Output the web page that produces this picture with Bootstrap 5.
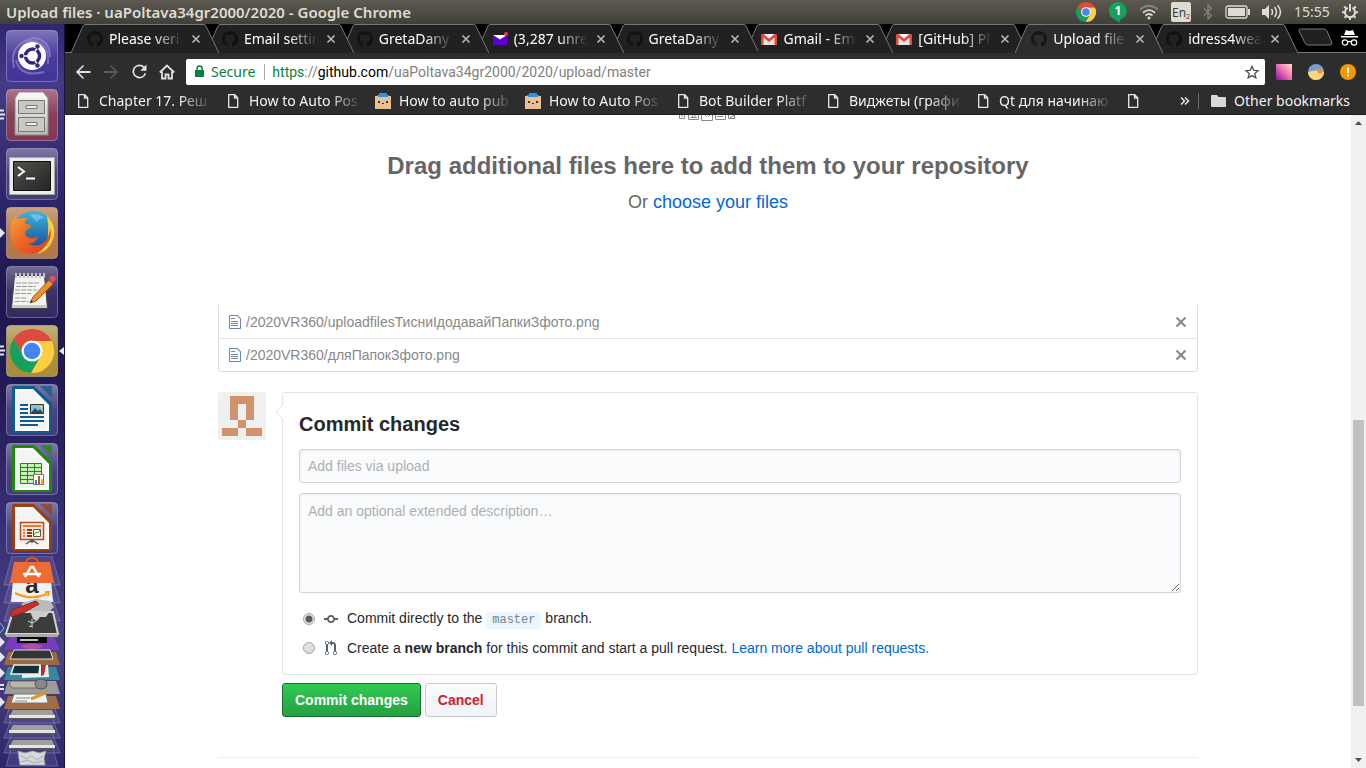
<!DOCTYPE html>
<html lang="en">
<head>
<meta charset="utf-8">
<meta name="viewport" content="width=device-width, initial-scale=1">
<title>Upload files · uaPoltava34gr2000/2020</title>
<link rel="stylesheet" href="https://cdn.jsdelivr.net/npm/bootstrap@5.3.0/dist/css/bootstrap.min.css">
<style>
  body { font-family: "Liberation Sans", Arial, sans-serif; font-size: 14px; line-height: 20px; color: #24292e; background: #fff; }
  svg { display: block; flex: none; }
  .shell-font { font-family: "Noto Sans", sans-serif; line-height: 20px; }
  .plain-btn { border: 0; padding: 0; background: none; color: inherit; }

  /* Desktop panel */
  .panel { height: 24px; padding: 0 8px 0 6px; background: linear-gradient(#5c5950, #403f3a); color: #dfdbd2; }
  .panel-title { font-size: 15px; font-weight: 600; }
  .panel-tray { gap: 12px; font-size: 14px; }
  .panel-clock { width: 36px; }

  /* Launcher */
  .launcher { width: 65px; padding-top: 6px; gap: 7px; border-right: 1px solid #16123c; background: linear-gradient(#2f2673 0, #453a86 8%, #30286f 22%, #1e174f 35%, #221b56 50%, #352d72 65%, #4a4384 85%, #2c2668 100%); }
  .folded { margin-top: -5px; }

  /* Browser frame */
  .tabstrip { height: 28px; padding-left: 6px; background: #000; }
  .tab-row { flex: 1 1 0; min-width: 0; }
  .tab { isolation: isolate; z-index: 1; flex: 1 1 0; min-width: 0; height: 29px; margin-right: -13px; padding: 0 18px 0 16px; color: #fff; font-size: 14px; text-decoration: none; gap: 6px; }
  .tab:nth-child(1) { z-index: 9; }
  .tab:nth-child(2) { z-index: 8; }
  .tab:nth-child(3) { z-index: 7; }
  .tab:nth-child(4) { z-index: 6; }
  .tab:nth-child(5) { z-index: 5; }
  .tab:nth-child(6) { z-index: 4; }
  .tab:nth-child(7) { z-index: 3; }
  .tab.tab-on { z-index: 10; }
  .tab:last-child { margin-right: 0; }
  .tab-shape { position: absolute; inset: 0; width: 100%; height: 100%; z-index: -1; color: #212121; }
  .tab-on .tab-shape { color: #2d2d2d; }
  .tab-label, .mark-label { overflow: hidden; white-space: nowrap; -webkit-mask-image: linear-gradient(90deg, #000 60%, transparent); mask-image: linear-gradient(90deg, #000 60%, transparent); }
  .tab-label { flex: 1 1 0; min-width: 0; }
  .tab-x { margin-left: 2px; }
  .strip-end { flex: none; width: 68px; padding: 0 8px 0 0; }
  .toolbar { background: #2d2d2d; border-top: 1px solid #777; height: 36px; padding: 2px 10px 0 4px; color: #e2e2e2; }
  .nav-btn { width: 28px; height: 28px; }
  .omnibox { height: 26px; margin-left: 5px; padding: 0 6px 0 8px; border-radius: 2px; background: #fff; color: #808080; font-size: 14px; }
  .omnibox .secure { color: #0b8043; margin: 0 9px 0 5px; }
  .omnibox .url { margin-left: 7px; font-family: Roboto, "Noto Sans", sans-serif; }
  .omnibox .scheme { color: #0b8043; }
  .omnibox .host { color: #000; }
  .url-rule { width: 1px; height: 16px; background: #a8a8a8; }
  .ext-icons { gap: 16px; margin-left: 10px; }
  .bookmarks { background: #2d2d2d; border-bottom: 1px solid #1c1c1c; height: 27px; padding: 0 16px 0 10px; font-size: 14px; color: #f2f2f2; }
  .bookmarks a { color: inherit; text-decoration: none; gap: 8px; }
  .mark-item { width: 150px; }
  .mark-label { width: 114px; -webkit-mask-image: linear-gradient(90deg, #000 70%, transparent); mask-image: linear-gradient(90deg, #000 70%, transparent); }
  .mark-tail { width: 16px; }

  /* Page */
  .page-col { max-width: 980px; }
  .drop-title { margin: 27px 0 0; font-size: 24px; line-height: 36px; font-weight: 700; color: #666; }
  .drop-sub { margin: 3px 0 0; padding-bottom: 88px; font-size: 18px; line-height: 30px; color: #666; }
  a { color: #0366d6; text-decoration: none; }
  .upload-list { border: 1px solid #ddd; border-top: 0; border-radius: 0 0 3px 3px; margin-bottom: 20px; }
  .upload-list .list-group-item { border: 0; border-radius: 0; padding: 6px 10px 6px 10px; height: 33px; color: #888; background: none; gap: 5px; }
  .upload-list .list-group-item + .list-group-item { border-top: 1px solid #e5e5e5; }
  .file-glyph { color: #6a87ae; }
  .remove-x { color: #888; }
  .commit-row { gap: 16px; }
  .commit-box { border: 1px solid #e1e4e8; border-radius: 3px; padding: 16px 16px 12px; }
  .commit-caret { position: absolute; left: -8px; top: 11px; }
  .commit-title { font-size: 20px; line-height: 30px; font-weight: 700; margin: 0 0 10px; }
  .field { display: block; border: 1px solid #d1d5da; border-radius: 3px; background: #fafbfc; box-shadow: inset 0 1px 2px rgba(27,31,35,.075); padding: 6px 8px; font-size: 14px; line-height: 20px; min-height: 34px; color: #24292e; }
  .field::placeholder { color: #acb0b4; }
  .field-tall { height: 100px; padding: 7px 8px; margin: 10px 0 11px; }
  .choice { height: 29px; padding-left: 4px; }
  .choice input { appearance: none; width: 12px; height: 12px; margin: 1px 9px 0 0; border: 1px solid #a5a5a5; border-radius: 50%; background: linear-gradient(#e4e4e4, #dadada); }
  .choice input:checked { background: radial-gradient(circle, #5a5a5a 0 2px, #5a5a5a 3px, #e2e2e2 4px); }
  .choice-glyph { width: 14px; margin-right: 9px; color: #586069; }
  .branch-chip { display: inline-block; font: 12px/17px "Liberation Mono", monospace; color: #7a828c; background: #eaf5ff; border-radius: 3px; padding: 0 6px; }
  .form-actions { gap: 4px; margin-top: 8px; padding-left: 64px; }
  .gh-btn { height: 34px; padding: 6px 12px; font-size: 14px; line-height: 20px; font-weight: 700; border-radius: 3px; }
  .gh-go, .gh-go:hover { color: #fff; border: 1px solid #1b6e31; background: linear-gradient(#2fcb53, #269f42); }
  .gh-cancel, .gh-cancel:hover { color: #cb2431; border: 1px solid #c8cccf; background: linear-gradient(#fafbfc, #eff3f6); }
  .page-rule { border-top: 1px solid #eaecef; margin-top: 40px; }

  /* Scroll bar */
  .scroller { width: 15px; background: #f1f1f1; }
  .scroll-thumb { width: 11px; background: #c1c1c1; }
</style>
</head>
<body class="vh-100 d-flex flex-column overflow-hidden">

<svg width="0" height="0" class="position-absolute" aria-hidden="true">
  <defs>
    <linearGradient id="gloss" x1="0" y1="0" x2="0" y2="1"><stop offset="0" stop-color="#fff" stop-opacity=".34"/><stop offset=".5" stop-color="#fff" stop-opacity=".08"/><stop offset="1" stop-color="#fff" stop-opacity=".04"/></linearGradient>
    <linearGradient id="steel" x1="0" y1="0" x2="0" y2="1"><stop offset="0" stop-color="#fbfbf9"/><stop offset="1" stop-color="#b9b9b4"/></linearGradient>
    <linearGradient id="screen" x1="0" y1="0" x2="1" y2="1"><stop offset="0" stop-color="#50524e"/><stop offset="1" stop-color="#242524"/></linearGradient>
    <linearGradient id="fox" x1="0" y1="0" x2="1" y2="1"><stop offset="0" stop-color="#f9a33a"/><stop offset=".5" stop-color="#ea6424"/><stop offset="1" stop-color="#d8392a"/></linearGradient>
    <linearGradient id="globe" x1="0" y1="0" x2="0" y2="1"><stop offset="0" stop-color="#3cb6e0"/><stop offset="1" stop-color="#17458f"/></linearGradient>
    <linearGradient id="pinkmix" x1="0" y1="1" x2="1" y2="0"><stop offset="0" stop-color="#8a0fa0"/><stop offset=".5" stop-color="#ee6fb0"/><stop offset="1" stop-color="#fde2cd"/></linearGradient>
    <symbol id="tabshape" viewBox="0 0 148 29" preserveAspectRatio="none"><path fill="currentColor" stroke="#777" d="M0 29L12 2Q13 .5 14 .5H133Q134.500 .5 135 2L148 29"/></symbol>
    <symbol id="octocat" viewBox="0 0 16 16"><path fill="currentColor" d="M8 0C3.580 0 0 3.580 0 8c0 3.540 2.290 6.530 5.470 7.590.4.070.550-.170.550-.380 0-.190-.010-.820-.010-1.490-2.010.370-2.530-.490-2.690-.940-.090-.230-.480-.940-.820-1.130-.280-.150-.680-.520-.010-.530.630-.010 1.080.580 1.230.820.720 1.210 1.870.870 2.330.660.070-.520.280-.870.510-1.070-1.780-.2-3.640-.890-3.640-3.950 0-.870.310-1.590.820-2.150-.080-.2-.360-1.020.080-2.120 0 0 .670-.210 2.200.820.640-.180 1.320-.270 2-.270.680 0 1.360.090 2 .270 1.530-1.040 2.200-.820 2.200-.820.440 1.100.160 1.920.080 2.120.510.560.820 1.270.820 2.150 0 3.070-1.870 3.750-3.650 3.950.290.250.540.730.540 1.480 0 1.070-.010 1.930-.010 2.200 0 .210.150.460.550.380A8.013 8.013 0 0 0 16 8c0-4.420-3.580-8-8-8z"/></symbol>
    <symbol id="closex" viewBox="0 0 10 10"><path d="M1.500 1.500l7 7M8.500 1.500l-7 7" stroke="#b8b8b8" stroke-width="1.600"/></symbol>
    <symbol id="gmail" viewBox="0 0 16 16"><path fill="#f2f2f2" d="M1 3h14v11H1z"/><path fill="#d5d5d5" d="M8 10L3 5v9h10V5z" opacity=".5"/><path fill="#dd4b3e" d="M1 3h1.500L8 7.800 13.500 3H15a1 1 0 0 1 1 1v10h-2.500V6.500L8 11 2.500 6.500V14H0V4a1 1 0 0 1 1-1z"/></symbol>
    <symbol id="sheet" viewBox="0 0 16 16"><path d="M3.700 1.700h6l3 3v9.600h-9z M9.500 1.700v3.500h3.200" fill="none" stroke="#e8e8e8" stroke-width="1.300"/></symbol>
    <symbol id="boxface" viewBox="0 0 16 16"><path fill="#2a93ea" d="M4 0h8v2h2v2H2V2h2z"/><path fill="#e9bf94" d="M0 3h16v13H0z"/><path fill="#2a93ea" d="M3 2h10v2H3z"/><path fill="#333" d="M3 8h2v2H3zM11 8h2v2h-2zM7 10h2v1H7z"/></symbol>
    <symbol id="chrome" viewBox="0 0 48 48"><path fill="#dd4b3e" d="M15.340 29L5.540 12.030A22 22 0 0 1 43.600 14H24z"/><path fill="#ffcd40" transform="rotate(120 24 24)" d="M15.340 29L5.540 12.030A22 22 0 0 1 43.600 14H24z"/><path fill="#16a05e" transform="rotate(240 24 24)" d="M15.340 29L5.540 12.030A22 22 0 0 1 43.600 14H24z"/><circle cx="24" cy="24" r="10.500" fill="#fff"/><circle cx="24" cy="24" r="8.300" fill="#4285f4"/></symbol>
    <symbol id="tile" viewBox="0 0 52 52"><rect x=".5" y=".5" width="51" height="51" rx="4" fill="currentColor"/><rect x=".5" y=".5" width="51" height="51" rx="4" fill="url(#gloss)" stroke="#fff" stroke-opacity=".3"/></symbol>
    <symbol id="office" viewBox="0 0 52 52"><path fill="currentColor" d="M8 2h20l18 17v27q0 3-3 3H9q-3 0-3-3V4q0-2 2-2z"/><path fill="currentColor" opacity=".75" d="M34 2h12v12z"/><path fill="#fff" d="M9 5h18l16 16v26H9z"/><path fill="#e9e9e9" d="M11 7h15l15 15v23H11z" opacity=".5"/></symbol>
    <symbol id="running" viewBox="0 0 5 12"><path d="M0 1.500h4M0 5.500h5M0 9.500h4" stroke="#e5e5ee" stroke-width="2"/></symbol>
    <symbol id="filetext" viewBox="0 0 12 16"><path fill="currentColor" d="M6 5H2V4h4v1zM2 8h7V7H2v1zm0 2h7V9H2v1zm0 2h7v-1H2v1zm10-7.500V14c0 .550-.450 1-1 1H1c-.550 0-1-.450-1-1V2c0-.550.450-1 1-1h7.500L12 4.500zM11 5L8 2H1v12h10V5z"/></symbol>
    <symbol id="octx" viewBox="0 0 12 16"><path fill="currentColor" d="M7.480 8l3.750 3.750-1.480 1.480L6 9.480l-3.750 3.750-1.480-1.480L4.520 8 .770 4.250l1.480-1.480L6 6.520l3.750-3.750 1.480 1.480L7.480 8z"/></symbol>
  </defs>
</svg>

<header class="panel shell-font d-flex align-items-center justify-content-between flex-shrink-0">
  <div class="panel-title text-nowrap">Upload files · uaPoltava34gr2000/2020 - Google Chrome</div>
  <div class="panel-tray d-flex align-items-center">
    <svg width="22" height="22"><use href="#chrome"/></svg>
    <svg width="18" height="22" viewBox="0 0 18 22"><path fill="#16a05e" d="M9 1a9 9 0 0 1 2 17.700l-1 3.300-3.500-3.300A9 9 0 0 1 9 1z"/><text x="9" y="14" text-anchor="middle" font-size="12" font-weight="700" fill="#fff">1</text></svg>
    <svg width="20" height="16" viewBox="0 0 20 16" fill="none" stroke-width="1.800"><path d="M1 5.500Q10-2 19 5.500" stroke="#85827a"/><path d="M4 8.700Q10 3.500 16 8.700M6.500 11.500Q10 8.500 13.500 11.500" stroke="#dfdbd2"/><circle cx="10" cy="14" r="1.500" fill="#dfdbd2"/></svg>
    <svg width="20" height="20" viewBox="0 0 20 20"><rect width="20" height="20" rx="2" fill="#dfdbd2"/><text x="1" y="15" font-size="12" fill="#3c3b37">En<tspan font-size="7" dy="2">2</tspan></text></svg>
    <svg width="10" height="16" viewBox="0 0 10 16" fill="none" stroke="#85827a" stroke-width="1.300"><path d="M1 4.500l7.500 7L5 15V1l3.500 3.500-7.500 7"/></svg>
    <svg width="25" height="14" viewBox="0 0 25 14"><rect x="1" y="1" width="21" height="12" rx="2" fill="none" stroke="#dfdbd2" stroke-width="1.300"/><path fill="#dfdbd2" d="M3 3h17v8H3zM23 4h2v6h-2z"/></svg>
    <svg width="20" height="16" viewBox="0 0 20 16"><path fill="#dfdbd2" d="M0 5h3l4-4v14l-4-4H0z"/><path d="M9.500 5q2 3 0 6M12.500 3q4 5 0 10M15.500 1.200q6 6.800 0 13.600" fill="none" stroke="#dfdbd2" stroke-width="1.500"/></svg>
    <span class="panel-clock">15:55</span>
    <svg width="16" height="16" viewBox="0 0 16 16" fill="none" stroke="#dfdbd2"><path stroke-width="2" d="M5.700 3.800a5 5 0 1 0 4.600 0"/><path stroke-width="2" d="M8 0v7.500M0 8.200h3M13 8.200h3M2.200 2.500L4.500 4.800M13.800 2.500l-2.300 2.300M2.600 13.800l2-2M13.400 13.800l-2-2M8 13v3"/></svg>
  </div>
</header>

<div class="d-flex flex-grow-1 overflow-hidden">

  <nav class="launcher d-flex flex-column flex-shrink-0 overflow-hidden" aria-label="Launcher">
    <button class="plain-btn" aria-label="Dash"><svg width="64" height="52" viewBox="0 0 64 52">
      <svg x="6" width="52" height="52" color="#3a2c94"><use href="#tile"/></svg>
      <g fill="none" stroke="#a9a0e0" stroke-opacity=".5" stroke-width="2"><path d="M14 38Q8 14 34 8 50 10 50 27M22 12Q50 6 48 34M16 30Q20 48 44 42"/></g>
      <circle cx="32" cy="26" r="14" fill="#fff"/><circle cx="32.500" cy="26" r="7" fill="none" stroke="#33277f" stroke-width="3.500"/><path d="M32.500 26h-10M32.500 26l5-9M32.500 26l5 9" stroke="#fff" stroke-width="1.500"/><circle cx="32.500" cy="26" r="5" fill="#fff"/><g fill="#33277f"><circle cx="21.500" cy="26" r="2.200"/><circle cx="37.500" cy="16.500" r="2.200"/><circle cx="37.500" cy="35.500" r="2.200"/></g></svg></button>
    <button class="plain-btn" aria-label="Files"><svg width="64" height="52" viewBox="0 0 64 52">
      <svg x="6" width="52" height="52" color="#7f2f4a"><use href="#tile"/></svg><svg y="20" width="5" height="12"><use href="#running"/></svg>
      <path fill="url(#steel)" stroke="#8a8a86" d="M15 9l4-6h24l5 6v37H15z"/><path fill="#c9c9c4" stroke="#777" d="M18.500 11.500h26v13h-26zM18.500 28.500h26v14h-26z"/><path d="M26 16.500h11v3H26zM26 33.500h11v3H26z" fill="#eee" stroke="#777"/></svg></button>
    <button class="plain-btn" aria-label="Terminal"><svg width="64" height="52" viewBox="0 0 64 52">
      <svg x="6" width="52" height="52" color="#3c3474"><use href="#tile"/></svg>
      <path fill="#ecece8" stroke="#a8a8a4" d="M9.500 9.500h45v37h-45z"/><path fill="url(#screen)" stroke="#111" d="M13.500 13.500h37v29h-37z"/><path d="M18 19l6 4.500-6 4.500M26 30.500h9" fill="none" stroke="#fff" stroke-width="2"/></svg></button>
    <button class="plain-btn" aria-label="Firefox"><svg width="64" height="52" viewBox="0 0 64 52">
      <svg x="6" width="52" height="52" color="#b1713f"><use href="#tile"/></svg><path fill="#e5e5ee" d="M0 21l5 5-5 5z"/>
      <circle cx="33" cy="24" r="20" fill="url(#globe)"/><path fill="#8fd0ea" opacity=".6" d="M30 8q8-3 14 3-5 0-7 4-4-4-7-7z"/><path fill="#f6cf3c" d="M47 9q9 8 7 20-3 14-17 18 12-8 11-20 1-9-1-18z"/><path fill="url(#fox)" d="M12 14q2-4 4-5 0 3 3 3 4-2 9-1-4 3-3 6 5 0 6 2-1 3-5 4-3 6 4 8 5 1 8-2-2 8-10 8 14 5 20-7 2-5 2-9 3 10-4 17-7 9-16 9Q14 46 11 32q-2-10 1-18z"/></svg></button>
    <button class="plain-btn" aria-label="Text editor"><svg width="64" height="52" viewBox="0 0 64 52">
      <svg x="6" width="52" height="52" color="#2b215c"><use href="#tile"/></svg>
      <path fill="#f4f4f1" stroke="#44423e" d="M14.500 9.500h30l3 33h-36z"/><path fill="#c8c8c4" d="M12 39h35v3H12z"/><path d="M16 7v5M20 7v5M24 7v5M28 7v5M32 7v5M36 7v5M40 7v5M44 7v5" stroke="#c4c4c4" stroke-width="2"/><path d="M16 17h24M16 20.500h20M15 24h22M15 27.500h16M15 32h12M14.500 35.500h14" stroke="#999" stroke-dasharray="5 1"/><path fill="#f08f2c" stroke="#a85a18" d="M33 31l16-17 4 4-17 17-6 2z"/><path fill="#e4525a" d="M49 13l2-3q4-1 5 3l-3 4z"/><path fill="#333" d="M30 37l1-3 2 2z"/></svg></button>
    <button class="plain-btn" aria-label="Google Chrome"><svg width="64" height="52" viewBox="0 0 64 52">
      <svg x="6" width="52" height="52" color="#a68832"><use href="#tile"/></svg><svg y="20" width="5" height="12"><use href="#running"/></svg><path fill="#e5e5ee" d="M64 22l-5 4 5 4z"/>
      <svg x="8" y="2" width="48" height="48"><use href="#chrome"/></svg></svg></button>
    <button class="plain-btn" aria-label="Writer"><svg width="64" height="52" viewBox="0 0 64 52">
      <svg x="6" width="52" height="52" color="#3a3478"><use href="#tile"/></svg><svg x="6" width="52" height="52" color="#0f5c8f"><use href="#office"/></svg>
      <path d="M20 21h8M20 25h8M20 29h8M20 33h24M20 37h24M20 41h18" stroke="#0f5c8f" stroke-width="2"/><path fill="#7cc2e6" stroke="#333" d="M30.500 20.500h13v9h-13z"/><path fill="#444" d="M31 29l4-5 3 3 2-2 3 4z"/><circle cx="41" cy="23" r="1.500" fill="#f6c945"/></svg></button>
    <button class="plain-btn" aria-label="Calc"><svg width="64" height="52" viewBox="0 0 64 52">
      <svg x="6" width="52" height="52" color="#3a3478"><use href="#tile"/></svg><svg x="6" width="52" height="52" color="#1e8a0c"><use href="#office"/></svg>
      <path fill="#c9efb9" stroke="#1e8a0c" d="M20.500 20.500h21v20h-21z"/><path d="M20 24.500h22M20 28.500h22M20 32.500h22M20 36.500h22M27.500 20v21M34.500 20v21" stroke="#1e8a0c"/><path fill="#fff" stroke="#777" d="M33.500 31.500h10v10h-10z"/><path fill="#3c7fc0" d="M35 37h2v4h-2z"/><path fill="#d94c1a" d="M38 33h2v8h-2z"/><path fill="#f2b32c" d="M41 36h2v5h-2z"/></svg></button>
    <button class="plain-btn" aria-label="Impress"><svg width="64" height="52" viewBox="0 0 64 52">
      <svg x="6" width="52" height="52" color="#3a3478"><use href="#tile"/></svg><svg x="6" width="52" height="52" color="#9c3f12"><use href="#office"/></svg>
      <path fill="#fbe9dd" stroke="#b5501c" stroke-width="1.500" d="M20.500 20.500h23v17h-23z"/><path d="M23 24h18" stroke="#e57a38" stroke-width="2"/><path d="M23 28h2M23 31h2M23 34h2" stroke="#e57a38" stroke-width="2"/><path d="M27 28h5M27 31h5M27 34h5" stroke="#8d3a12" stroke-width="2"/><path fill="#fff" stroke="#555" d="M33.500 27.500h7v7h-7z"/><path d="M34 33l2-3 2 1 2-3" fill="none" stroke="#2a9a2a"/><path d="M26 42l6-4 6 4M32 38v3" fill="none" stroke="#555" stroke-width="1.500"/></svg></button>
    <svg class="folded" width="64" height="212" viewBox="0 556 64 212" aria-label="Folded launcher items">
      <g fill="#9a93c8" fill-opacity=".2" stroke="#b9b4dc" stroke-opacity=".35"><path d="M12 556h40l8 29H4zM12 576h40l8 27H4zM12 596h40l8 25H4zM12 700h40l8 23H4zM12 717h40l8 21H4zM12 733h40l8 20H4zM12 746h40l6 20H6z"/></g>
      <path fill="#f1f1f1" d="M13 580h38l2 22H11z"/><text x="32" y="593" text-anchor="middle" font-family="Liberation Sans" font-weight="700" font-size="24" fill="#2a2a2e">a</text>
      <path d="M26 564q0-6 6-6t6 6" fill="none" stroke="#d65a2a" stroke-width="2"/><path fill="#ee6b33" d="M14 562h36l4 21H10z"/><path d="M25 577l6-10h2l6 10M23 574h18" fill="none" stroke="#fff" stroke-width="2.400"/>
      <path d="M15 593q16 8 32 1M45 592l4 0-1 4" fill="none" stroke="#f79a1e" stroke-width="2"/>
      <path fill="#bbb" d="M22 603l14-4 14 2 4 6-10 10H20z"/><path fill="#3c3d3b" stroke="#d4d4d0" stroke-width="2" d="M13 612h40l5 22H6z"/><path fill="#ccc" d="M30 611h20l-4 6-6 0-3 4-4-2z"/><path fill="#c5322c" stroke="#8e211d" d="M10 614q2-5 10-7l16-6 3 3-14 8-13 5z"/>
      <path fill="#aaa" d="M6 634h52v3H6z"/><path d="M28 621l4 2 4-2M32 619v7M29 626l4 1" stroke="#ddd" fill="none"/>
      <path fill="#7a3bc0" d="M10 637h44l6 13H4z"/><path fill="#b04fa8" d="M20 646l12-3 12 3-12 5z"/><path fill="#080808" d="M17 637h30v6H17z"/><path d="M20 640h18" stroke="#fff" stroke-width="1.500"/>
      <path fill="#9a6a40" d="M8 652h48l4 13H4z"/><path fill="#343434" stroke="#ddd" d="M14 650h36l3 9H10z"/>
      <path fill="#37889f" d="M8 667h48l4 13H4z"/><path fill="#eee" d="M22 666l26-1 1 12-27 1z"/><path fill="#b52f2f" d="M41 665l5 0-2 10-3 1z"/><path fill="#12303c" stroke="#eee" stroke-width="1.500" d="M14 665h26l-1 9H11z"/>
      <path fill="#9d9d98" d="M8 681h48l4 13H4z"/><path fill="#b9b8a4" stroke="#666" d="M11 681h32q4 3 3 7H12q-4-4-1-7z"/><ellipse cx="41" cy="684" rx="6" ry="5" fill="#888" stroke="#555"/>
      <path fill="#a06c43" d="M8 696h48l4 13H4z"/><path fill="#f3f3f0" stroke="#777" d="M14 694h32l2 9H11z"/><path d="M16 698h14M15 701h12" stroke="#888"/><path d="M31 699l14-6" stroke="#e8902c" stroke-width="3"/>
      <g id="drive"><path fill="#9e9e9c" d="M13 710h39l3 7H9z"/><path fill="#e4e4e2" d="M9 715h46v3H9z"/><path fill="#555" d="M9 718h46v1.500H9z"/></g><use href="#drive" y="15"/><use href="#drive" y="30"/>
      <path fill="#d6d8da" stroke="#9aa" stroke-dasharray="2 1" d="M18 751l7 2 8-2 6 2 7-2-2 7 1 7H20l-1-6z"/>
      <path d="M20 755l6 4 5-3 6 4 6-4M21 762l7-2 6 3 9-2" stroke="#a8acae" fill="none"/>
      <g fill="#e5e5ee"><path d="M0 637l5 5-5 5zM0 652l5 5-5 5zM0 668l5 5-5 5zM0 697l5 5-5 5z"/><path d="M0 684h4v2H0zM0 688h4v2H0z"/></g><path d="M0 623l4 5-4 5" fill="none" stroke="#67c3f0"/>
    </svg>
  </nav>

  <div class="d-flex flex-column flex-grow-1 overflow-hidden">

    <div class="tabstrip shell-font d-flex flex-shrink-0">
      <div class="tab-row d-flex">
        <a href="#" class="tab position-relative d-flex align-items-center"><svg class="tab-shape"><use href="#tabshape"/></svg><svg width="16" height="16" color="#121212"><use href="#octocat"/></svg><span class="tab-label">Please veri</span><svg class="tab-x" width="10" height="10"><use href="#closex"/></svg></a>
        <a href="#" class="tab position-relative d-flex align-items-center"><svg class="tab-shape"><use href="#tabshape"/></svg><svg width="16" height="16" color="#121212"><use href="#octocat"/></svg><span class="tab-label">Email settin</span><svg class="tab-x" width="10" height="10"><use href="#closex"/></svg></a>
        <a href="#" class="tab position-relative d-flex align-items-center"><svg class="tab-shape"><use href="#tabshape"/></svg><svg width="16" height="16" color="#121212"><use href="#octocat"/></svg><span class="tab-label">GretaDany</span><svg class="tab-x" width="10" height="10"><use href="#closex"/></svg></a>
        <a href="#" class="tab position-relative d-flex align-items-center"><svg class="tab-shape"><use href="#tabshape"/></svg><svg width="16" height="16" viewBox="0 0 16 16"><path fill="#5f01d1" d="M1 4h14v10H1z"/><path fill="#fff" d="M1 4h14L8 8.500z"/><circle cx="14" cy="3" r="2" fill="#ff333a"/></svg><span class="tab-label">(3,287 unre</span><svg class="tab-x" width="10" height="10"><use href="#closex"/></svg></a>
        <a href="#" class="tab position-relative d-flex align-items-center"><svg class="tab-shape"><use href="#tabshape"/></svg><svg width="16" height="16" color="#121212"><use href="#octocat"/></svg><span class="tab-label">GretaDany</span><svg class="tab-x" width="10" height="10"><use href="#closex"/></svg></a>
        <a href="#" class="tab position-relative d-flex align-items-center"><svg class="tab-shape"><use href="#tabshape"/></svg><svg width="16" height="16"><use href="#gmail"/></svg><span class="tab-label">Gmail - Ema</span><svg class="tab-x" width="10" height="10"><use href="#closex"/></svg></a>
        <a href="#" class="tab position-relative d-flex align-items-center"><svg class="tab-shape"><use href="#tabshape"/></svg><svg width="16" height="16"><use href="#gmail"/></svg><span class="tab-label">[GitHub] Pl</span><svg class="tab-x" width="10" height="10"><use href="#closex"/></svg></a>
        <a href="#" class="tab tab-on position-relative d-flex align-items-center" aria-current="page"><svg class="tab-shape"><use href="#tabshape"/></svg><svg width="16" height="16" color="#161616"><use href="#octocat"/></svg><span class="tab-label">Upload file</span><svg class="tab-x" width="10" height="10"><use href="#closex"/></svg></a>
        <a href="#" class="tab position-relative d-flex align-items-center"><svg class="tab-shape"><use href="#tabshape"/></svg><svg width="16" height="16" color="#121212"><use href="#octocat"/></svg><span class="tab-label">idress4wea</span><svg class="tab-x" width="10" height="10"><use href="#closex"/></svg></a>
      </div>
      <div class="strip-end d-flex align-items-center justify-content-between">
        <button class="plain-btn" aria-label="New tab"><svg width="35" height="20" viewBox="0 0 35 20"><path fill="#212121" stroke="#777" d="M2 1h24q2 0 3 2l5 12q0 2-2 2H10q-2 0-3-2L1 3q0-2 1-2z"/></svg></button>
        <svg width="17" height="18" viewBox="0 0 17 18"><path fill="#fff" d="M5 1l3.500 1L12 1l2 5H3zM0 7h17v1.500H0z"/><g fill="none" stroke="#fff" stroke-width="1.200"><circle cx="4" cy="13.500" r="2.700"/><circle cx="13" cy="13.500" r="2.700"/><path d="M6.700 13q1.800-1.200 3.600 0"/></g></svg>
      </div>
    </div>

    <div class="toolbar shell-font d-flex align-items-center flex-shrink-0">
      <button class="plain-btn nav-btn d-flex align-items-center justify-content-center" aria-label="Back"><svg width="20" height="20" viewBox="0 0 24 24"><path fill="currentColor" d="M21 10.800H7.400l5.900-5.900L12 3.500 3.500 12l8.500 8.500 1.300-1.400-5.900-5.900H21z"/></svg></button>
      <button class="plain-btn nav-btn d-flex align-items-center justify-content-center" aria-label="Forward"><svg width="20" height="20" viewBox="0 0 24 24"><path fill="#5a5a5a" d="M3 10.800h13.600l-5.900-5.900L12 3.500l8.500 8.500-8.500 8.500-1.300-1.400 5.900-5.900H3z"/></svg></button>
      <button class="plain-btn nav-btn d-flex align-items-center justify-content-center" aria-label="Reload"><svg width="21" height="21" viewBox="0 0 24 24"><path fill="currentColor" d="M17.650 6.350A8 8 0 1 0 19.730 14h-2.080A6 6 0 1 1 12 6c1.660 0 3.140.690 4.220 1.780L13 11h7V4z"/></svg></button>
      <button class="plain-btn nav-btn d-flex align-items-center justify-content-center" aria-label="Home"><svg width="18" height="18" viewBox="0 0 18 18"><path fill="none" stroke="currentColor" stroke-width="1.800" d="M1.800 9.500L9 2.500l7.200 7M4 8.500v7h3.500v-4h3v4H14v-7"/></svg></button>
      <div class="omnibox d-flex align-items-center flex-grow-1 text-nowrap" role="textbox" aria-label="Address">
        <svg width="12" height="13" viewBox="0 0 12 13"><path fill="#0b8043" d="M1 5h9v7H1z"/><path d="M3 5.500V3.500q0-2.500 2.500-2.500T8 3.500v2" fill="none" stroke="#0b8043" stroke-width="1.500"/></svg>
        <span class="secure">Secure</span><span class="url-rule"></span>
        <span class="url flex-grow-1"><span class="scheme">https</span>://<span class="host">github.com</span>/uaPoltava34gr2000/2020/upload/master</span>
        <svg width="14" height="14" viewBox="0 0 16 16"><path fill="none" stroke="#505050" stroke-width="1.500" d="M8 1.500l2 4.600 5 .4-3.800 3.300 1.200 4.900L8 12.100l-4.400 2.600 1.200-4.900L1 6.500l5-.4z"/></svg>
      </div>
      <div class="ext-icons d-flex align-items-center">
        <svg width="17" height="16" viewBox="0 0 17 16"><path fill="url(#pinkmix)" d="M1 0h16v16H1z"/></svg>
        <svg width="16" height="16" viewBox="0 0 16 16"><circle cx="8" cy="8" r="8" fill="#7d9bd0"/><path fill="#fbd581" d="M0 8q8-3 16 0a8 8 0 0 1-16 0z"/><circle cx="12" cy="7" r="2.500" fill="#f0922c"/></svg>
        <svg width="16" height="16" viewBox="0 0 16 16"><circle cx="8" cy="8" r="8" fill="#f29900"/><path fill="#fff" d="M7 3.500h2V9H7zM7 10.500h2v2H7z"/></svg>
      </div>
    </div>

    <div class="bookmarks shell-font d-flex align-items-center flex-shrink-0">
      <div class="d-flex flex-grow-1 overflow-hidden">
        <a href="#" class="mark-item d-flex align-items-center flex-shrink-0"><svg width="16" height="16"><use href="#sheet"/></svg><span class="mark-label">Chapter 17. Реш</span></a>
        <a href="#" class="mark-item d-flex align-items-center flex-shrink-0"><svg width="16" height="16"><use href="#sheet"/></svg><span class="mark-label">How to Auto Pos</span></a>
        <a href="#" class="mark-item d-flex align-items-center flex-shrink-0"><svg width="16" height="16"><use href="#boxface"/></svg><span class="mark-label">How to auto pub</span></a>
        <a href="#" class="mark-item d-flex align-items-center flex-shrink-0"><svg width="16" height="16"><use href="#boxface"/></svg><span class="mark-label">How to Auto Pos</span></a>
        <a href="#" class="mark-item d-flex align-items-center flex-shrink-0"><svg width="16" height="16"><use href="#sheet"/></svg><span class="mark-label">Bot Builder Platf</span></a>
        <a href="#" class="mark-item d-flex align-items-center flex-shrink-0"><svg width="16" height="16"><use href="#sheet"/></svg><span class="mark-label">Виджеты (графи</span></a>
        <a href="#" class="mark-item d-flex align-items-center flex-shrink-0"><svg width="16" height="16"><use href="#sheet"/></svg><span class="mark-label">Qt для начинаю</span></a>
        <a href="#" class="mark-tail d-flex align-items-center flex-shrink-0" aria-label="Bookmark"><svg width="16" height="16"><use href="#sheet"/></svg></a>
      </div>
      <button class="plain-btn me-2" aria-label="More bookmarks"><svg width="10" height="10" viewBox="0 0 10 10"><path d="M1 1.500L4.500 5 1 8.500M5 1.500L8.500 5 5 8.500" fill="none" stroke="#e8e8e8" stroke-width="1.500"/></svg></button>
      <span class="url-rule opacity-50 me-2"></span>
      <a href="#" class="d-flex align-items-center text-nowrap ms-1"><svg width="15" height="14" viewBox="0 0 15 14"><path fill="#d8d8d8" d="M1 1h5l1.500 2H14q1 0 1 1v8q0 1-1 1H1q-1 0-1-1V2q0-1 1-1z"/></svg><span>Other bookmarks</span></a>
    </div>

    <div class="d-flex flex-grow-1 overflow-hidden">
      <main class="flex-grow-1 overflow-hidden">
        <div class="page-col mx-auto">
          <svg class="mx-auto" width="58" height="6" viewBox="0 0 58 6" fill="none" stroke="#888"><path d="M.5 0v3.500h5V0M3 0v2M9.500 0v4.500h10V0M11 2.500h7M13.500 0v3M16 0v3M22.500 0v5.500h11V0M26 0l1.500 1.500M31 0l-1.500 1.500M36.500 0v4.500h10V0M38 1.500h6M49.500 0v3.500h6V0M51 3l4-3"/></svg>
          <h1 class="drop-title text-center">Drag additional files here to add them to your repository</h1>
          <p class="drop-sub text-center">Or <a href="#">choose your files</a></p>

          <ul class="upload-list list-group">
            <li class="list-group-item d-flex align-items-center"><svg class="file-glyph" width="12" height="16"><use href="#filetext"/></svg><span class="flex-grow-1">/2020VR360/uploadfilesТисниІдодавайПапкиЗфото.png</span><button class="plain-btn remove-x" aria-label="Remove file"><svg width="12" height="16"><use href="#octx"/></svg></button></li>
            <li class="list-group-item d-flex align-items-center"><svg class="file-glyph" width="12" height="16"><use href="#filetext"/></svg><span class="flex-grow-1">/2020VR360/дляПапокЗфото.png</span><button class="plain-btn remove-x" aria-label="Remove file"><svg width="12" height="16"><use href="#octx"/></svg></button></li>
          </ul>

          <form>
            <div class="commit-row d-flex align-items-start">
              <svg width="48" height="48" viewBox="0 0 48 48" aria-label="Avatar"><rect width="48" height="48" rx="3" fill="#f0f0f0"/><path fill="#d0936c" d="M12 4h24v24h-8V12h-8v16h-8zM20 28h8v8h-8zM4 36h16v8H4zM28 36h16v8H28z"/></svg>
              <div class="commit-box position-relative flex-grow-1">
                <svg class="commit-caret" width="9" height="16" viewBox="0 0 9 16"><path fill="#fff" stroke="#e1e4e8" d="M8.500 0L.8 8l7.700 8"/><path fill="#fff" d="M8 1.500h1v13H8z"/></svg>
                <h2 class="commit-title">Commit changes</h2>
                <input class="field w-100" type="text" aria-label="Commit summary" placeholder="Add files via upload">
                <textarea class="field field-tall w-100" aria-label="Commit description" placeholder="Add an optional extended description…"></textarea>
                <div class="choice d-flex align-items-center">
                  <input type="radio" name="target" id="direct" checked>
                  <label class="d-flex align-items-center" for="direct"><svg class="choice-glyph" width="14" height="16" viewBox="0 0 14 16"><path fill="currentColor" d="M10.860 7c-.450-1.720-2-3-3.860-3-1.860 0-3.410 1.280-3.860 3H0v2h3.140c.450 1.720 2 3 3.860 3 1.860 0 3.410-1.280 3.860-3H14V7h-3.140zM7 10.200c-1.220 0-2.200-.980-2.200-2.200 0-1.220.980-2.200 2.200-2.200 1.220 0 2.200.980 2.200 2.200 0 1.220-.980 2.200-2.200 2.200z"/></svg><span>Commit directly to the <code class="branch-chip">master</code> branch.</span></label>
                </div>
                <div class="choice d-flex align-items-center">
                  <input type="radio" name="target" id="newbranch">
                  <label class="d-flex align-items-center" for="newbranch"><svg class="choice-glyph" width="12" height="16" viewBox="0 0 12 16"><path fill="currentColor" d="M11 11.280V5c-.030-.780-.340-1.470-.940-2.060C9.460 2.350 8.780 2.030 8 2H7V0L4 3l3 3V4h1c.270.020.480.110.690.310.210.2.3.420.310.690v6.280A1.993 1.993 0 0 0 10 15a1.993 1.993 0 0 0 1-3.720zm-1 2.920c-.660 0-1.200-.550-1.200-1.200 0-.650.550-1.200 1.200-1.200.650 0 1.200.550 1.200 1.200 0 .650-.550 1.200-1.200 1.200zM4 3c0-1.110-.890-2-2-2a1.993 1.993 0 0 0-1 3.720v6.560A1.993 1.993 0 0 0 2 15a1.993 1.993 0 0 0 1-3.720V4.720c.590-.340 1-.980 1-1.720zm-.8 10c0 .660-.550 1.200-1.200 1.200-.650 0-1.200-.550-1.200-1.200 0-.650.550-1.200 1.200-1.200.650 0 1.200.550 1.200 1.200zM2 4.200C1.340 4.200.8 3.650.8 3c0-.650.550-1.200 1.200-1.200.650 0 1.200.550 1.200 1.200 0 .650-.550 1.200-1.200 1.200z"/></svg><span>Create a <b>new branch</b> for this commit and start a pull request. <a href="#">Learn more about pull requests.</a></span></label>
                </div>
              </div>
            </div>
            <div class="form-actions d-flex">
              <button class="btn gh-btn gh-go" type="submit">Commit changes</button>
              <button class="btn gh-btn gh-cancel" type="button">Cancel</button>
            </div>
          </form>
          <div class="page-rule"></div>
        </div>
      </main>

      <div class="scroller d-flex flex-column align-items-center flex-shrink-0">
        <svg width="15" height="17" viewBox="0 0 15 17"><path fill="#505050" d="M4 10l3.500-4L11 10z"/></svg>
        <div class="flex-grow-1 d-flex flex-column w-100 align-items-center">
          <div style="flex:288"></div><div class="scroll-thumb" style="flex:286"></div><div style="flex:45"></div>
        </div>
        <svg width="15" height="17" viewBox="0 0 15 17"><path fill="#505050" d="M4 7h7l-3.500 4z"/></svg>
      </div>
    </div>
  </div>
</div>

<script src="https://cdn.jsdelivr.net/npm/bootstrap@5.3.0/dist/js/bootstrap.bundle.min.js"></script>
</body>
</html>
